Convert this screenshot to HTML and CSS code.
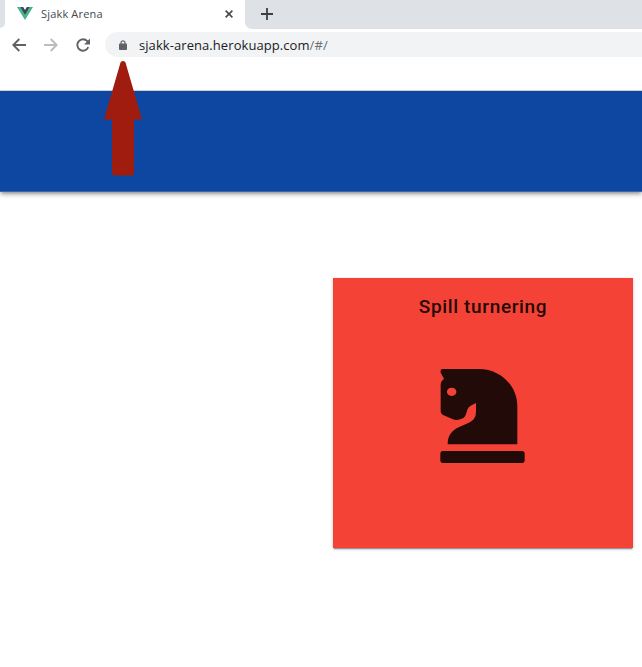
FILE: index.html
```html
<!DOCTYPE html>
<html lang="no">
<head>
<meta charset="utf-8">
<title>Sjakk Arena</title>
<link rel="stylesheet" href="styles.css">
</head>
<body>
<div class="tabs">
  <div class="tab-edge"><span></span></div>
  <div class="tab">
    <svg class="vue" viewBox="0 0 16 13"><path fill="#41b883" d="M0 0h3.2L8 8.2 12.8 0H16L8 13z"/><path fill="#35495e" d="M3.2 0h3L8 3l1.800-3h3L8 8.200z"/></svg>
    <span class="tab-title">Sjakk Arena</span>
    <svg class="close" viewBox="0 0 8 8"><path d="M.6.6l6.800 6.800M7.400.6L.6 7.400"/></svg>
  </div>
  <div class="tab-rest"><svg class="plus" viewBox="0 0 12 12"><path d="M6 0v12M0 6h12"/></svg></div>
</div>
<div class="toolbar">
  <svg class="nav" viewBox="0 0 14 14"><path d="M14 7H1.500M7.300 1L1.300 7l6 6"/></svg>
  <svg class="nav forward" viewBox="0 0 14 14"><path d="M0 7h12.500M6.700 1l6 6-6 6"/></svg>
  <svg class="nav reload" viewBox="0 0 14 14"><path d="M12.300 9.200A5.700 5.700 0 1 1 11.300 3.200L12.500 4.500"/><path class="solid" d="M14 .6v5.900H8.100z"/></svg>
  <div class="address">
    <svg class="lock" viewBox="0 0 8 10"><path class="shackle" d="M2 4.500V2.800a2 2 0 0 1 4 0v1.700"/><rect y="3.500" width="8" height="6.500" rx=".8"/></svg>
    <span class="url">sjakk-arena.herokuapp.com<span class="path">/#/</span></span>
  </div>
</div>
<header class="appbar"></header>
<main>
  <section class="card">
    <h1>Spill turnering</h1>
    <svg class="knight" viewBox="45 39 258 288"><path fill-rule="evenodd" d="M52 42H162C225 42 277 91 277 154V268H68C68 243 79 227 101 217L130 204Q153 194 153 171V144L137 152Q129 156 127 164L122 180Q120 186 114 190Q95 199 82 192L56 181Q47 177 47 168V86Q47 79 57 71L47 53Q45 42 52 42ZM80 98C61 98 61 123 80 123C99 123 99 98 80 98Z"/><rect x="46" y="288" width="253" height="36" rx="8"/></svg>
  </section>
</main>
<svg class="pointer" viewBox="0 0 38 116"><path d="M16.500 1.500Q17 0 19 0T21.500 1.500L38 58.500H30V112Q30 114.500 27.500 114.500H10.500Q8 114.500 8 112V58.500H0z"/></svg>
</body>
</html>
```
FILE: styles.css
```css
* { box-sizing: border-box; }
body {
  margin: 0;
  height: 667px;
  overflow: hidden;
  background: #fff;
  font-family: "Open Sans", "Noto Sans", sans-serif;
}
svg { display: block; flex: none; }
.tabs { display: flex; height: 29px; background: #fff; }
.tab-edge { width: 5px; background: #fff; }
.tab-edge span {
  display: block;
  height: 28px;
  background: #dee1e6;
  border-bottom-right-radius: 5px;
}
.tab {
  display: flex;
  align-items: center;
  position: relative;
  width: 240px;
  height: 27px;
  padding: 0 12px;
}
.vue { width: 16px; height: 13px; }
.tab-title {
  margin-left: 8px;
  font-size: 11px;
  letter-spacing: .17px;
  color: #45494d;
  white-space: nowrap;
}
.close {
  width: 8px;
  height: 8px;
  margin-left: auto;
  stroke: #45494d;
  stroke-width: 1.6;
}
.tab-rest {
  flex: 1;
  padding: 8px 16px;
  background: #dee1e6;
  border-bottom-left-radius: 7px;
}
.plus { width: 12px; height: 12px; stroke: #3c4043; stroke-width: 1.8; }
.toolbar {
  display: flex;
  align-items: center;
  height: 62px;
  padding: 3px 0 33px 12px;
  border-bottom: 1px solid #d5d6d9;
}
.nav {
  width: 14px;
  height: 14px;
  margin-right: 18px;
  fill: none;
  stroke: #5f6368;
  stroke-width: 1.9;
}
.forward { stroke: #babcbe; }
.reload { margin-right: 15px; }
.solid { fill: #5f6368; stroke: none; }
.address {
  display: flex;
  align-items: center;
  flex: 1;
  height: 25px;
  padding-left: 14px;
  background: #f1f3f4;
  border-radius: 13px 0 0 13px;
}
.lock { width: 8px; height: 10px; fill: #5f6368; }
.shackle { fill: none; stroke: #5f6368; stroke-width: 1.2; }
.url {
  margin-left: 12px;
  font-size: 13px;
  letter-spacing: .07px;
  color: #202124;
  white-space: nowrap;
}
.path { color: #6b6f73; }
.appbar {
  height: 101px;
  background: #0d47a1;
  border-bottom: 1px solid #3a66ac;
  box-shadow: 0 2px 4px -1px rgba(0,0,0,.4), 0 3px 5px rgba(0,0,0,.16);
}
main { display: flex; justify-content: flex-end; padding: 86px 9px 0 0; }
.card {
  display: flex;
  flex-direction: column;
  align-items: center;
  width: 300px;
  height: 270px;
  background: #f44336;
  box-shadow: 0 2px 1px -1px rgba(0,0,0,.3), 0 1px 3px rgba(0,0,0,.25);
}
h1 {
  margin: 13px 0 0;
  font: 500 19px/32px Roboto, sans-serif;
  letter-spacing: .65px;
  color: #250a08;
}
.knight { width: 86px; height: 96px; margin-top: 45px; fill: #210a08; }
/* Callout arrow overlaid on the toolbar and app bar */
.pointer {
  position: absolute;
  left: 104px;
  top: 61px;
  width: 38px;
  height: 116px;
  fill: #a01c0f;
}
```
